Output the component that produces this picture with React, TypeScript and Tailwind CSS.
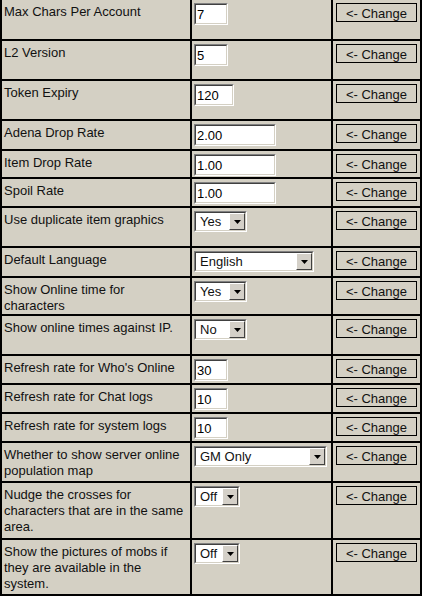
type Control =
  | { kind: "input"; value: string; w: string }
  | { kind: "select"; value: string; w: string };

type Row = { label: string[]; h: string; control: Control };

const rows: Row[] = [
  { label: ["Max Chars Per Account"], h: "h-[41px]", control: { kind: "input", value: "7", w: "w-[34px]" } },
  { label: ["L2 Version"], h: "h-[40px]", control: { kind: "input", value: "5", w: "w-[34px]" } },
  { label: ["Token Expiry"], h: "h-[40px]", control: { kind: "input", value: "120", w: "w-[40px]" } },
  { label: ["Adena Drop Rate"], h: "h-[30px]", control: { kind: "input", value: "2.00", w: "w-[82px]" } },
  { label: ["Item Drop Rate"], h: "h-[28px]", control: { kind: "input", value: "1.00", w: "w-[82px]" } },
  { label: ["Spoil Rate"], h: "h-[29px]", control: { kind: "input", value: "1.00", w: "w-[82px]" } },
  { label: ["Use duplicate item graphics"], h: "h-[40px]", control: { kind: "select", value: "Yes", w: "w-[53px]" } },
  { label: ["Default Language"], h: "h-[30px]", control: { kind: "select", value: "English", w: "w-[120px]" } },
  { label: ["Show Online time for", "characters"], h: "h-[38px]", control: { kind: "select", value: "Yes", w: "w-[53px]" } },
  { label: ["Show online times against IP."], h: "h-[40px]", control: { kind: "select", value: "No", w: "w-[53px]" } },
  { label: ["Refresh rate for Who's Online"], h: "h-[29px]", control: { kind: "input", value: "30", w: "w-[34px]" } },
  { label: ["Refresh rate for Chat logs"], h: "h-[29px]", control: { kind: "input", value: "10", w: "w-[34px]" } },
  { label: ["Refresh rate for system logs"], h: "h-[29px]", control: { kind: "input", value: "10", w: "w-[34px]" } },
  { label: ["Whether to show server online", "population map"], h: "h-[40px]", control: { kind: "select", value: "GM Only", w: "w-[133px]" } },
  { label: ["Nudge the crosses for", "characters that are in the same", "area."], h: "h-[57px]", control: { kind: "select", value: "Off", w: "w-[46px]" } },
  { label: ["Show the pictures of mobs if", "they are available in the", "system."], h: "h-[56px]", control: { kind: "select", value: "Off", w: "w-[46px]" } },
];

// sunken win-classic box (text fields and combos)
function Sunken({ w, h, children }: { w: string; h: string; children: React.ReactNode }) {
  return (
    <div className={`${w} ${h} border border-t-[#808080] border-l-[#808080] border-b-white border-r-white`}>
      <div className="h-full border border-t-[#404040] border-l-[#404040] border-b-[#d4d0c4] border-r-[#d4d0c4] bg-white flex">
        {children}
      </div>
    </div>
  );
}

function TextBox({ value, w }: { value: string; w: string }) {
  return (
    <Sunken w={w} h="h-[22px]">
      <input
        readOnly
        value={value}
        className="w-full h-full pl-[1px] pt-[1px] bg-white outline-none text-[13px] leading-[18px] text-black"
      />
    </Sunken>
  );
}

function Combo({ value, w }: { value: string; w: string }) {
  return (
    <Sunken w={w} h="h-[21px]">
      <span className="flex-1 pl-[4px] pt-[1px] leading-[16px] whitespace-nowrap overflow-hidden">{value}</span>
      <div className="w-[16px] h-full bg-[#d4d0c8] border border-t-white border-l-white border-b-[#404040] border-r-[#404040] flex items-center justify-center">
        <svg width="7" height="4" viewBox="0 0 7 4">
          <path d="M0 0h7L3.5 4z" fill="#000" />
        </svg>
      </div>
    </Sunken>
  );
}

export default function App() {
  return (
    <div className="w-[422px] h-[596px] bg-[#d4d0c4] border-x-2 border-black font-['Liberation_Sans',Arial,sans-serif] text-[13px] leading-[16px] text-[#111] overflow-hidden">
      {rows.map((r, i) => (
        <div key={i} className={`flex ${r.h} border-b-2 border-black`}>
          <div className="w-[188px] px-[2px] pt-[4px] whitespace-nowrap">
            {r.label.map((l, j) => (
              <div key={j}>{l}</div>
            ))}
          </div>
          <div className="w-[141px] border-l-2 border-black pl-[2px] pt-[3px]">
            {r.control.kind === "input" ? (
              <TextBox value={r.control.value} w={r.control.w} />
            ) : (
              <Combo value={r.control.value} w={r.control.w} />
            )}
          </div>
          <div className="w-[89px] border-l-2 border-black pl-[3px] pt-[3px]">
            <button className="w-[81px] h-[19px] border border-black bg-[#d4d0c4] text-[13px] leading-[17px] pt-[1px] text-center">
              &lt;- Change
            </button>
          </div>
        </div>
      ))}
    </div>
  );
}
